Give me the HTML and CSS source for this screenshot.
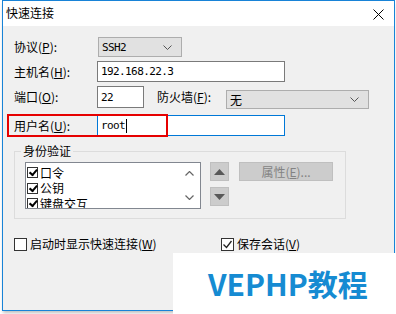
FILE: index.html
```html
<!DOCTYPE html>
<html lang="zh-CN">
<head>
  <meta charset="UTF-8" />
  <title>快速连接</title>
  <link rel="stylesheet" href="styles.css">
</head>
<body>
  <div class="window">
    <div class="titlebar">
      <span class="title">快速连接</span>
      <svg class="close" width="11" height="11" viewBox="0 0 11 11">
        <path d="M0.5 0.5 L10.5 10.5 M10.5 0.5 L0.5 10.5" stroke="#000" stroke-width="1" fill="none"/>
      </svg>
    </div>

    <div class="content">
      <div class="row row-protocol">
        <label class="label">协议(<u>P</u>):</label>
        <div class="select select-protocol">
          <span class="mono">SSH2</span>
          <svg width="9" height="5" viewBox="0 0 9 5"><path d="M0.5 0.5 L4.5 4.5 L8.5 0.5" stroke="#555" fill="none"/></svg>
        </div>
      </div>

      <div class="row row-host">
        <label class="label">主机名(<u>H</u>):</label>
        <div class="input input-host mono">192.168.22.3</div>
      </div>

      <div class="row row-port">
        <label class="label">端口(<u>O</u>):</label>
        <div class="input input-port mono">22</div>
        <label class="label-fw">防火墙(<u>F</u>):</label>
        <div class="select select-fw">
          <span>无</span>
          <svg width="9" height="5" viewBox="0 0 9 5"><path d="M0.5 0.5 L4.5 4.5 L8.5 0.5" stroke="#555" fill="none"/></svg>
        </div>
      </div>

      <div class="row row-user">
        <label class="label">用户名(<u>U</u>):</label>
        <div class="input input-user mono">root<span class="caret"></span></div>
        <div class="highlight"></div>
      </div>

      <div class="group">
        <span class="group-title">身份验证</span>
        <div class="list">
          <div class="items">
            <div class="item"><span class="box checked"></span>口令</div>
            <div class="item"><span class="box checked"></span>公钥</div>
            <div class="item"><span class="box checked"></span>键盘交互</div>
          </div>
          <div class="scroll">
            <svg width="9" height="5" viewBox="0 0 9 5"><path d="M0.5 4.5 L4.5 0.5 L8.5 4.5" stroke="#666" stroke-width="1.2" fill="none"/></svg>
            <svg width="9" height="5" viewBox="0 0 9 5"><path d="M0.5 0.5 L4.5 4.5 L8.5 0.5" stroke="#666" stroke-width="1.2" fill="none"/></svg>
          </div>
        </div>
        <div class="arrows">
          <div class="btn-arrow"><svg width="11" height="6" viewBox="0 0 11 6"><path d="M0 6 L5.5 0 L11 6 Z" fill="#595959"/></svg></div>
          <div class="btn-arrow"><svg width="11" height="6" viewBox="0 0 11 6"><path d="M0 0 L5.5 6 L11 0 Z" fill="#595959"/></svg></div>
        </div>
        <div class="btn-prop">属性(<u>E</u>)...</div>
      </div>

      <div class="options">
        <div class="option option-startup"><span class="cb"></span>启动时显示快速连接(<u>W</u>)</div>
        <div class="option option-save">
          <span class="cb">
            <svg width="11" height="11" viewBox="0 0 11 11"><path d="M1.5 5.5 L4.5 8.5 L9.5 2" stroke="#222" stroke-width="1.3" fill="none"/></svg>
          </span>保存会话(<u>V</u>)
        </div>
      </div>
    </div>
  </div>

  <div class="watermark">VEPHP教程</div>
</body>
</html>
```

FILE: styles.css
```css
* {
  box-sizing: border-box;
  margin: 0;
  padding: 0;
}

body {
  position: relative;
  width: 396px;
  height: 314px;
  background: #fff;
  font-family: 'Noto Sans CJK SC', 'Noto Sans', sans-serif;
  font-size: 12px;
  color: #000;
  overflow: hidden;
}

u {
  text-decoration: underline;
  text-underline-offset: 1px;
}

.mono {
  font-family: 'DejaVu Sans Mono', 'Liberation Mono', monospace;
  font-size: 11px;
  letter-spacing: -0.6px;
}

.window {
  margin-left: 2px;
  width: 393px;
  height: 311px;
  border: 1px solid #1883d7;
  background: #f0f0f0;
  box-shadow: 0 3px 3px -1px rgba(0, 0, 0, 0.25);
}

.titlebar {
  height: 25px;
  background: #fff;
  display: flex;
  align-items: center;
  justify-content: space-between;
  padding: 0 10px 0 3px;
}

.title {
  line-height: 14px;
  margin-top: -1px;
}

.close {
  margin-top: 1px;
}

.content {
  padding: 11px 0 0 11px;
  display: flex;
  flex-direction: column;
}

.row {
  display: flex;
  align-items: center;
  position: relative;
}

.label {
  width: 83px;
  line-height: 14px;
}

.row-protocol {
  height: 20px;
}

.row-host {
  height: 21px;
  margin-top: 4px;
}

.row-port {
  height: 22px;
  margin-top: 4px;
}

.row-user {
  height: 21px;
  margin-top: 7px;
}

.select {
  display: flex;
  align-items: center;
  justify-content: space-between;
  background: #e1e1e1;
  border: 1px solid #adadad;
  padding: 0 9px 0 3px;
}

.select-protocol {
  margin-left: 1px;
  width: 84px;
  height: 20px;
}

.select-fw {
  width: 143px;
  height: 19px;
  align-self: flex-start;
  margin-top: 4px;
  font-size: 12px;
}

.input {
  background: #fff;
  border: 1px solid #7a7a7a;
  height: 100%;
  display: flex;
  align-items: center;
  padding-left: 3px;
}

.input-host {
  width: 188px;
}

.input-port {
  width: 47px;
}

.label-fw {
  margin-left: 13px;
  width: 69px;
  line-height: 14px;
}

.input-user {
  width: 188px;
  border-color: #0078d7;
}

.caret {
  display: inline-block;
  width: 1px;
  height: 14px;
  background: #000;
  margin-left: 1px;
}

.highlight {
  position: absolute;
  left: -7px;
  top: -1px;
  width: 161px;
  height: 23px;
  border: 2px solid #e60000;
}

.group {
  position: relative;
  margin-top: 15px;
  width: 332px;
  height: 68px;
  border: 1px solid #dcdcdc;
  padding: 10px 0 0 10px;
  display: flex;
  align-items: flex-start;
}

.group-title {
  position: absolute;
  left: 6px;
  top: -8px;
  padding: 0 2px;
  background: #f0f0f0;
  line-height: 14px;
}

.list {
  width: 176px;
  height: 47px;
  background: #fff;
  border: 1px solid #828790;
  display: flex;
  overflow: hidden;
}

.items {
  flex: 1;
  padding-top: 2px;
}

.item {
  height: 15.5px;
  display: flex;
  align-items: center;
  padding-left: 1px;
  line-height: 14px;
}

.box {
  width: 11px;
  height: 11px;
  border: 1px solid #333;
  margin-right: 2px;
  position: relative;
  background: #fff;
}

.box.checked::after {
  content: '';
  position: absolute;
  left: 1px;
  top: -1px;
  width: 3px;
  height: 6px;
  border: solid #000;
  border-width: 0 2px 2px 0;
  transform: rotate(40deg);
  transform-origin: 0 0;
  margin-left: 5px;
}

.scroll {
  width: 17px;
  display: flex;
  flex-direction: column;
  justify-content: space-between;
  align-items: center;
  padding: 8px 4px 8px 0;
}

.arrows {
  margin-left: 9px;
  display: flex;
  flex-direction: column;
  gap: 6px;
}

.btn-arrow {
  width: 19px;
  height: 19px;
  background: #cccccc;
  border: 1px solid #bfbfbf;
  display: flex;
  align-items: center;
  justify-content: center;
}

.btn-prop {
  margin-left: 10px;
  width: 94px;
  height: 19px;
  background: #cccccc;
  border: 1px solid #bfbfbf;
  color: #838383;
  display: flex;
  align-items: center;
  justify-content: center;
  line-height: 14px;
}

.options {
  display: flex;
  margin-top: 18px;
}

.option {
  display: flex;
  align-items: center;
  line-height: 14px;
}

.option-startup {
  width: 207px;
}

.cb {
  width: 13px;
  height: 13px;
  border: 1px solid #333;
  background: #fff;
  margin-right: 3px;
  display: flex;
  align-items: center;
  justify-content: center;
}

.watermark {
  position: absolute;
  left: 173px;
  top: 253px;
  right: 0;
  bottom: 0;
  background: #fff;
  color: #168bd2;
  font-family: 'Noto Sans CJK SC', 'Noto Sans', sans-serif;
  font-weight: bold;
  font-size: 30px;
  line-height: 1;
  padding: 15px 0 0 35px;
}
```
